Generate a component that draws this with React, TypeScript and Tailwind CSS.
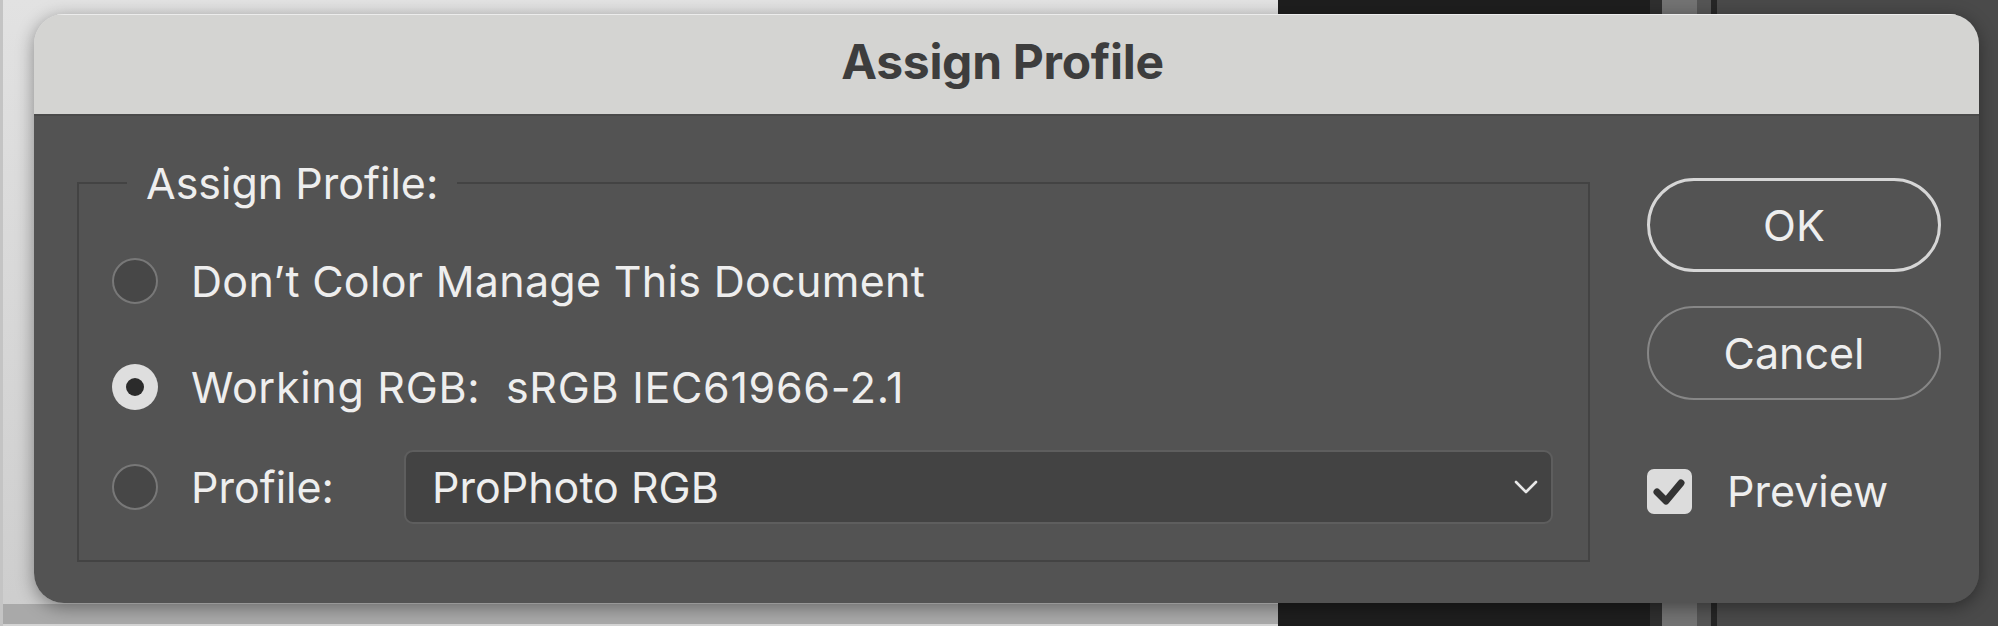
import React from 'react';

const font = { fontFamily: 'Inter, "Noto Sans", sans-serif' };

function Radio({ checked }: { checked?: boolean }) {
  if (checked) {
    return (
      <div className="w-[46px] h-[46px] rounded-full bg-[#dedede] flex items-center justify-center shrink-0">
        <div className="w-[18px] h-[18px] rounded-full bg-[#2b2b2b]" />
      </div>
    );
  }
  return <div className="w-[46px] h-[46px] rounded-full bg-[#474747] border-2 border-[#787878] shrink-0" />;
}

export default function App() {
  return (
    <div className="relative w-[1998px] h-[626px] overflow-hidden flex" style={font}>
      {/* backdrop: light window on the left, dark app chrome on the right */}
      <div className="w-[1278px] h-full flex flex-col bg-gradient-to-b from-[#e2e2e2] to-[#cdcdcd] border-l-[3px] border-[#c4c4c4]">
        <div className="mt-auto h-[22px] bg-[#a9a9a9] border-b-2 border-[#d4d4d4]" />
      </div>
      <div className="flex-1 flex">
        <div className="w-[372px] bg-[#1e1e1e]" />
        <div className="w-[12px] bg-[#2f2f2f]" />
        <div className="w-[35px] bg-[#737373]" />
        <div className="w-[14px] bg-[#555555]" />
        <div className="w-[6px] bg-[#262626]" />
        <div className="flex-1 bg-[#4a4a4a]" />
      </div>

      {/* dialog */}
      <div className="absolute left-[34px] top-[14px] w-[1945px] h-[589px] rounded-[30px] overflow-hidden flex flex-col shadow-[0_4px_18px_rgba(0,0,0,0.4)]">
        <div className="h-[102px] shrink-0 bg-[#d4d4d2] border-t border-[#ececec] border-b-2 border-b-[#4a4a4a] flex items-center justify-center">
          <span className="text-[48px] font-bold text-[#3d3d3d] tracking-[-0.3px] mt-[-6px] ml-[-8px]">Assign Profile</span>
        </div>

        <div className="flex-1 bg-[#535353] flex pl-[43px] pt-[43px] pr-[37px] text-[#eeeeee] text-[43px]">
          <fieldset className="w-[1513px] h-[403px] border-2 border-[#434343] px-[33px]">
            <legend className="ml-[15px] px-[19px] leading-[48px]">Assign Profile:</legend>

            <div className="flex flex-col pt-[24px]">
              <div className="h-[100px] flex items-center">
                <Radio />
                <span className="ml-[33px] tracking-[0.3px]">Don’t Color Manage This Document</span>
              </div>
              <div className="h-[112px] flex items-center">
                <Radio checked />
                <span className="ml-[33px] whitespace-pre tracking-[0.7px]">Working RGB:  sRGB IEC61966-2.1</span>
              </div>
              <div className="h-[88px] flex items-center">
                <Radio />
                <span className="ml-[33px] w-[213px]">Profile:</span>
                <div className="w-[1149px] h-[74px] rounded-[9px] bg-[#434343] border-2 border-[#5e5e5e] flex items-center pl-[26px] pr-[12px]">
                  <span className="flex-1">ProPhoto RGB</span>
                  <svg width="26" height="16" viewBox="0 0 26 16" fill="none">
                    <path d="M3 3 L13 13 L23 3" stroke="#e8e8e8" strokeWidth="2.6" strokeLinecap="round" strokeLinejoin="round" />
                  </svg>
                </div>
              </div>
            </div>
          </fieldset>

          <div className="ml-[57px] flex flex-col pt-[19px]">
            <button className="w-[294px] h-[94px] rounded-full border-[3px] border-[#d6d6d6] text-[#eeeeee]">OK</button>
            <button className="mt-[34px] w-[294px] h-[94px] rounded-full border-2 border-[#878787] text-[#eeeeee]">Cancel</button>
            <div className="mt-[59px] flex items-center">
              <div className="w-[45px] h-[45px] rounded-[7px] bg-[#dcdcdc] flex items-center justify-center">
                <svg width="45" height="45" viewBox="0 0 45 45" fill="none">
                  <path d="M10 23 L19 32 L34 14" stroke="#333333" strokeWidth="7" strokeLinecap="round" strokeLinejoin="round" />
                </svg>
              </div>
              <span className="ml-[35px]">Preview</span>
            </div>
          </div>
        </div>
      </div>
    </div>
  );
}
